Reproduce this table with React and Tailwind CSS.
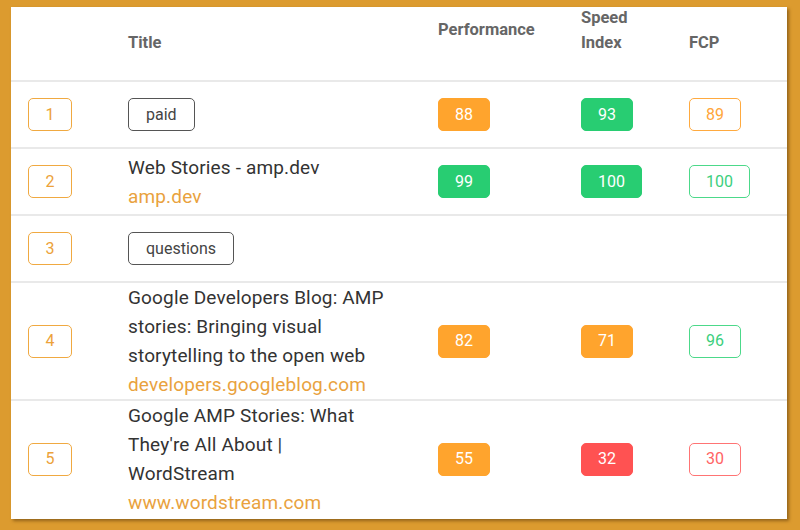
import React from "react";

const rows = [
  { n: 1, tag: "paid", perf: 88, si: 93, fcp: 89 },
  { n: 2, title: "Web Stories - amp.dev", link: "amp.dev", perf: 99, si: 100, fcp: 100 },
  { n: 3, tag: "questions" },
  {
    n: 4,
    title: "Google Developers Blog: AMP stories: Bringing visual storytelling to the open web",
    link: "developers.googleblog.com",
    perf: 82,
    si: 71,
    fcp: 96,
  },
  {
    n: 5,
    title: "Google AMP Stories: What They're All About | WordStream",
    link: "www.wordstream.com",
    perf: 55,
    si: 32,
    fcp: 30,
    last: true,
  },
];

function Filled({ v }) {
  const cls =
    v >= 90
      ? "bg-[#28cd72] border-[#28cd72]"
      : v >= 50
      ? "bg-[#ffa42d] border-[#ffa42d]"
      : "bg-[#ff5252] border-[#ff5252]";
  return (
    <span className={`inline-flex h-[33px] items-center rounded-[5px] border px-4 text-[16px] leading-6 text-white ${cls}`}>
      {v}
    </span>
  );
}

function Outline({ v }) {
  const cls =
    v >= 90
      ? "border-[#4cd98a] text-[#3ccf7e]"
      : v >= 50
      ? "border-[#ffaa3f] text-[#ffa63a]"
      : "border-[#ff7474] text-[#ff6464]";
  return (
    <span className={`inline-flex h-[33px] items-center rounded-[5px] border bg-white px-4 text-[16px] leading-6 ${cls}`}>
      {v}
    </span>
  );
}

export default function App() {
  return (
    <div
      className="min-h-[530px] w-[800px] bg-[#dc9b2f] pl-[11px] pr-[13px] pt-[7px] pb-[9px]"
      style={{ fontFamily: "Roboto, 'Noto Sans', sans-serif" }}
    >
      <div className="w-[776px] bg-white shadow-[2px_2px_3px_rgba(90,55,10,0.55)]">
        <div className="grid grid-cols-[117px_310px_143px_108px_1fr] items-start h-[75px] border-b-2 border-[#e9e9e9] text-[16.5px] font-bold text-[#666] leading-[25px]">
          <div />
          <div className="pt-[23px]">Title</div>
          <div className="pt-[10px]">Performance</div>
          <div className="-mt-[2px]">
            Speed
            <br />
            Index
          </div>
          <div className="pt-[23px]">FCP</div>
        </div>
        {rows.map((r) => (
          <div
            key={r.n}
            className={`grid grid-cols-[117px_310px_143px_108px_1fr] items-center min-h-[67px] border-b-2 ${
              r.last ? "border-transparent" : "border-[#e9e9e9]"
            }`}
          >
            <div className="pl-[17px]">
              <span className="inline-flex h-[33px] w-[44px] items-center justify-center rounded-[5px] border border-[#f0a941] text-[16px] text-[#eca23a]">
                {r.n}
              </span>
            </div>
            <div className="pr-[46px] text-[19px] tracking-[0.15px] leading-[29px]">
              {r.tag ? (
                <span className="inline-flex h-[33px] items-center rounded-[5px] border border-[#555] px-[17px] text-[16px] tracking-normal text-[#444]">
                  {r.tag}
                </span>
              ) : (
                <div>
                  <div className="text-[#333]">{r.title}</div>
                  <div className="text-[#e9a23e]">{r.link}</div>
                </div>
              )}
            </div>
            <div>{r.perf != null && <Filled v={r.perf} />}</div>
            <div>{r.si != null && <Filled v={r.si} />}</div>
            <div>{r.fcp != null && <Outline v={r.fcp} />}</div>
          </div>
        ))}
      </div>
    </div>
  );
}
